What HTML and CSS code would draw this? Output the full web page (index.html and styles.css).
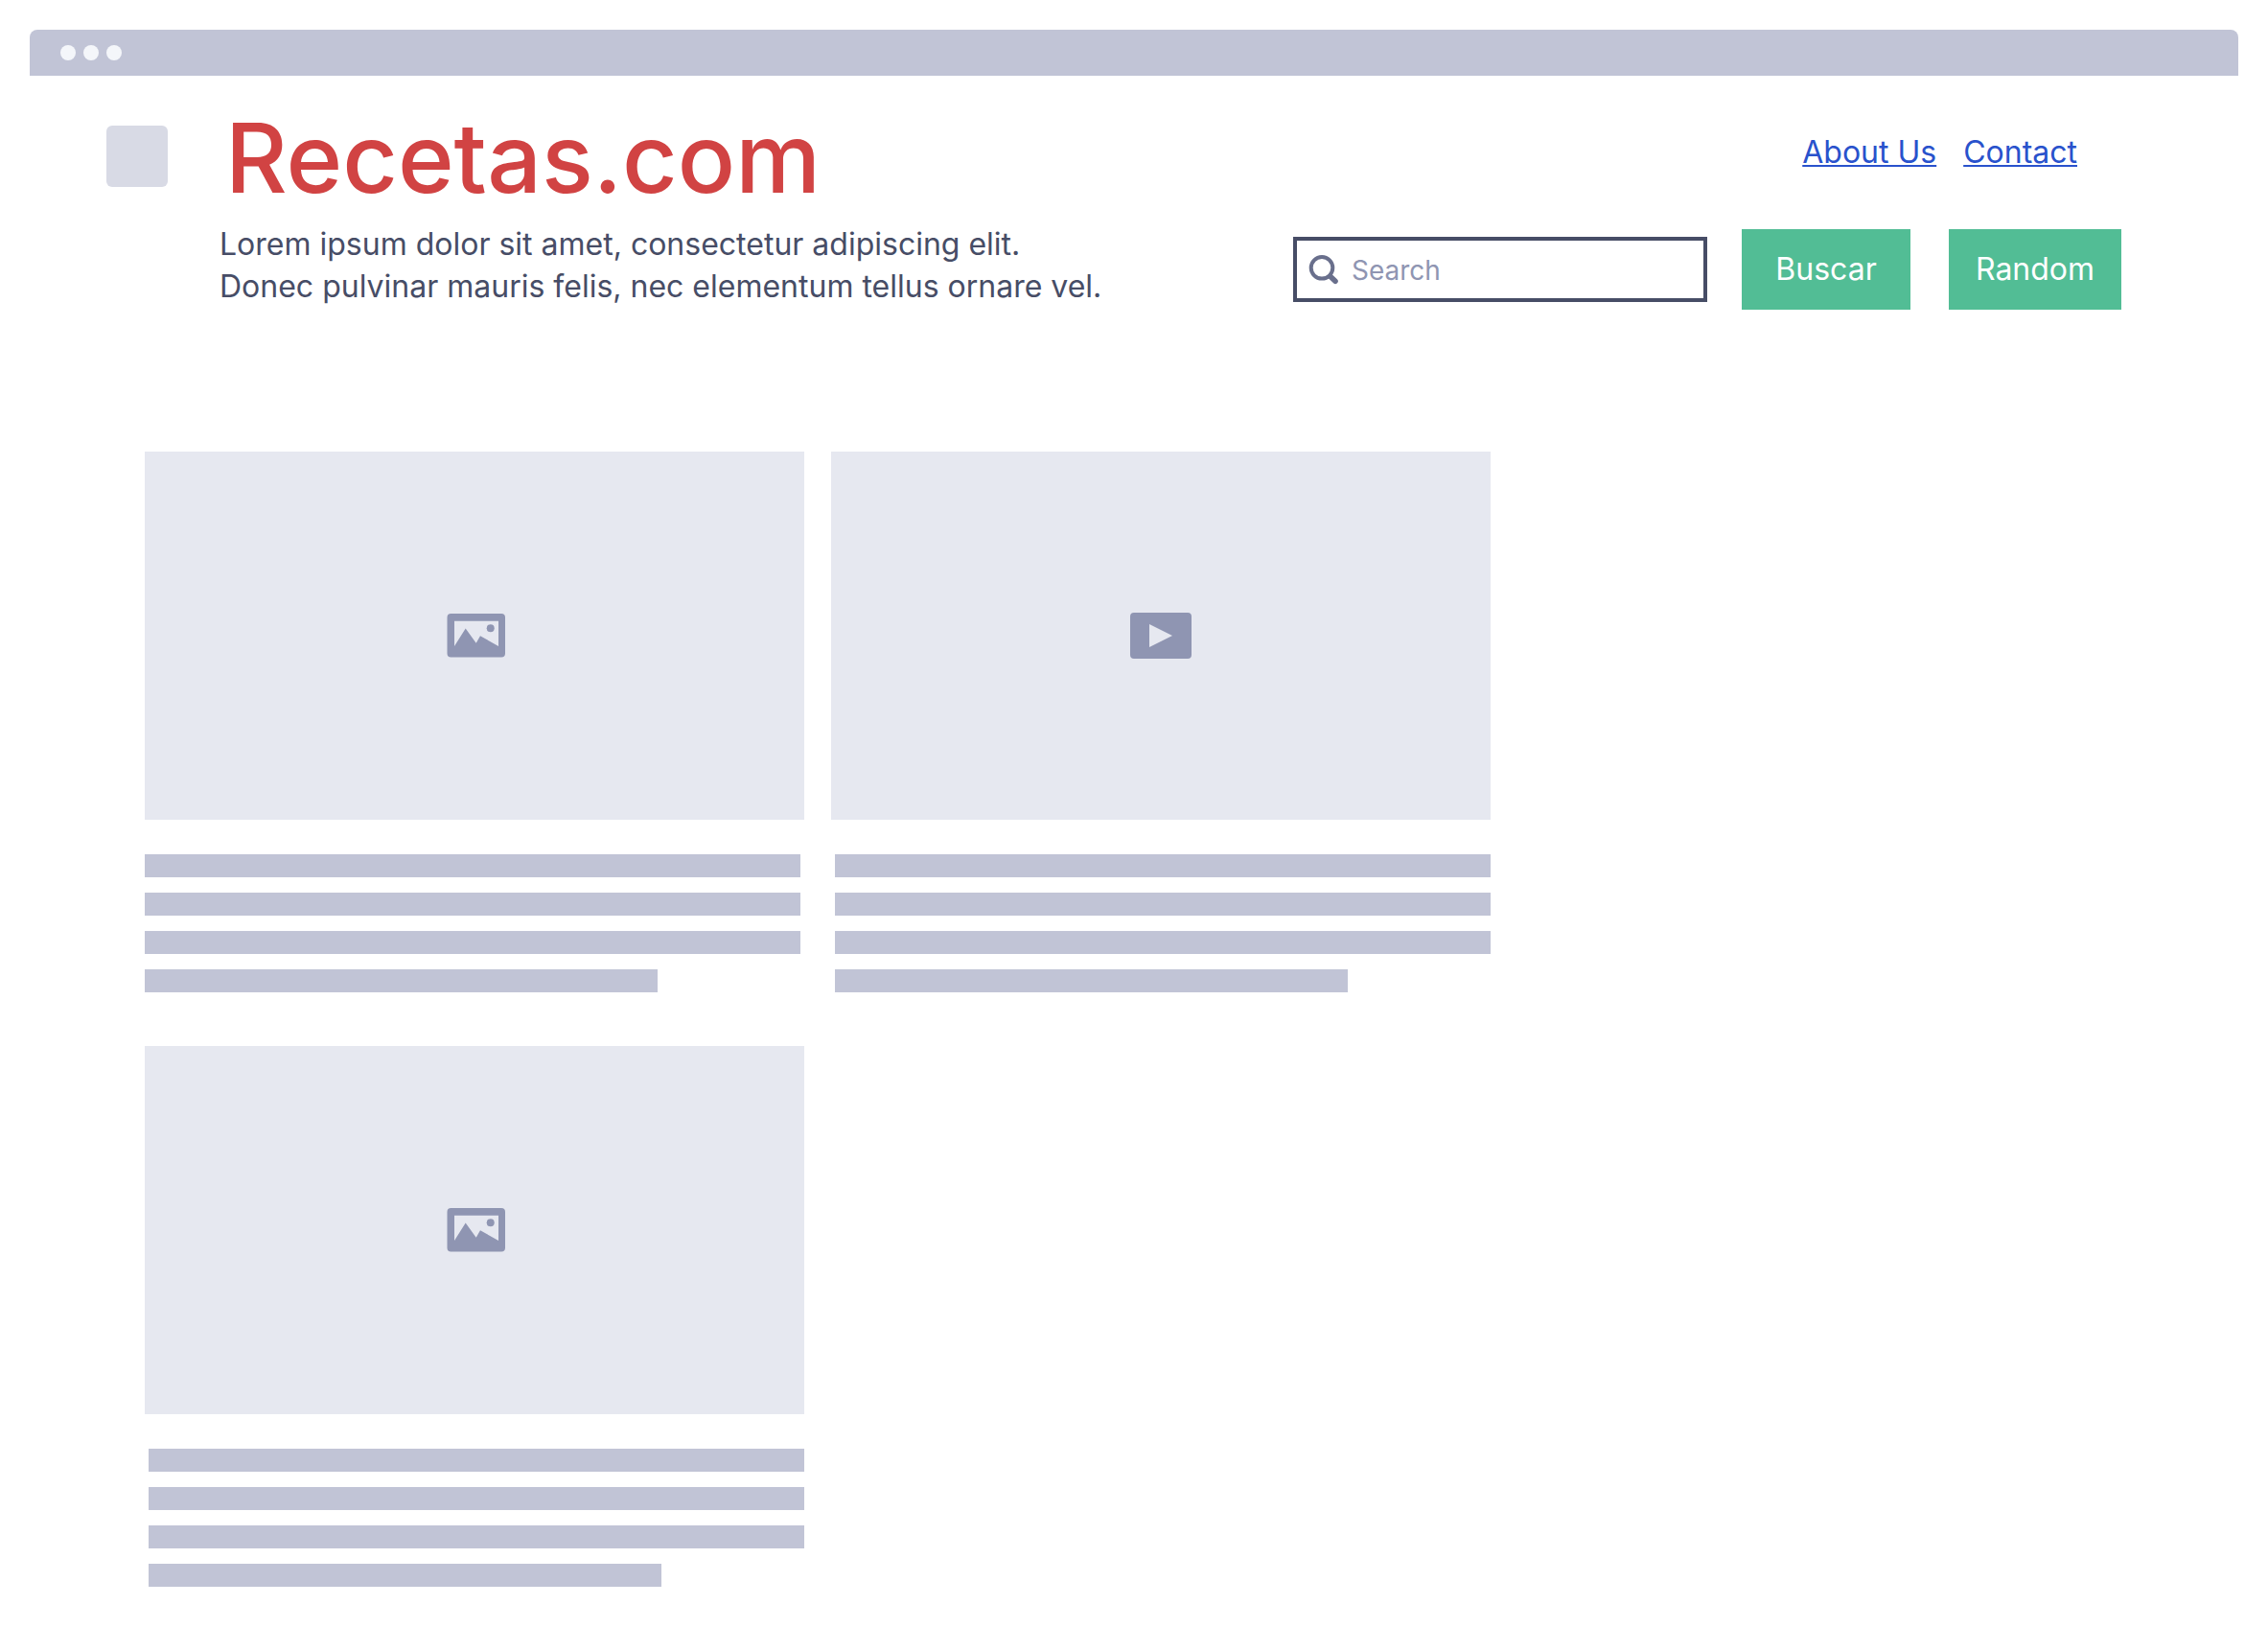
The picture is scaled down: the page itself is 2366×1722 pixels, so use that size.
FILE: index.html
```html
<!DOCTYPE html>
<html lang="es">
<head>
<meta charset="utf-8">
<meta name="viewport" content="width=device-width, initial-scale=1">
<title>Recetas.com</title>
<link rel="stylesheet" href="styles.css">
</head>
<body>
<div class="window">
  <div class="window-bar">
    <span class="dot"></span><span class="dot"></span><span class="dot"></span>
  </div>
  <header class="header">
    <div class="logo"></div>
    <div class="brand">
      <h1 class="title">Recetas.com</h1>
      <p class="tagline">Lorem ipsum dolor sit amet, consectetur adipiscing elit.<br>Donec pulvinar mauris felis, nec elementum tellus ornare vel.</p>
    </div>
    <div class="tools">
      <nav class="nav">
        <a class="link" href="#about">About Us</a>
        <a class="link" href="#contact">Contact</a>
      </nav>
      <form class="search-form">
        <label class="search">
          <svg class="search-icon" viewBox="0 0 32 32" fill="none" stroke="currentColor" stroke-linecap="round" aria-hidden="true">
            <circle cx="14" cy="14.3" r="11.3" stroke-width="4"/>
            <path d="M23 23.4L28 28.2" stroke-width="5.6"/>
          </svg>
          <input class="search-input" type="text" placeholder="Search" aria-label="Search">
        </label>
        <button class="button button-search" type="submit">Buscar</button>
        <button class="button button-random" type="button">Random</button>
      </form>
    </div>
  </header>
  <main class="cards">
    <article class="card">
      <div class="media">
        <svg class="media-icon" viewBox="0 0 64 48" aria-hidden="true">
          <path fill="currentColor" fill-rule="evenodd" d="M7.500 1H60a4 4 0 0 1 4 4V42.500a4 4 0 0 1-4 4H7.500a4 4 0 0 1-4-4V5a4 4 0 0 1 4-4ZM11 8.700V35L22.700 16.500L33.700 31.700L38 24.200L57 35V8.700Z"/>
          <circle cx="48.700" cy="16.300" r="4" fill="currentColor"/>
        </svg>
      </div>
      <div class="lines"><span class="line"></span><span class="line"></span><span class="line"></span><span class="line line-short"></span></div>
    </article>
    <article class="card">
      <div class="media">
        <svg class="media-icon" viewBox="0 0 64 48" aria-hidden="true">
          <path fill="currentColor" fill-rule="evenodd" d="M4 0H60a4 4 0 0 1 4 4V44a4 4 0 0 1-4 4H4a4 4 0 0 1-4-4V4a4 4 0 0 1 4-4ZM20 12V36L44 24Z"/>
        </svg>
      </div>
      <div class="lines lines-end"><span class="line"></span><span class="line"></span><span class="line"></span><span class="line line-short"></span></div>
    </article>
    <article class="card card-row-start">
      <div class="media">
        <svg class="media-icon" viewBox="0 0 64 48" aria-hidden="true">
          <path fill="currentColor" fill-rule="evenodd" d="M7.500 1H60a4 4 0 0 1 4 4V42.500a4 4 0 0 1-4 4H7.500a4 4 0 0 1-4-4V5a4 4 0 0 1 4-4ZM11 8.700V35L22.700 16.500L33.700 31.700L38 24.200L57 35V8.700Z"/>
          <circle cx="48.700" cy="16.300" r="4" fill="currentColor"/>
        </svg>
      </div>
      <div class="lines lines-end"><span class="line"></span><span class="line"></span><span class="line"></span><span class="line line-short"></span></div>
    </article>
  </main>
</div>
</body>
</html>
```
FILE: styles.css
```css
* {
  box-sizing: border-box;
}

body {
  margin: 0;
  padding: 31px;
  background: #fff;
  color: #474d66;
  font-family: Inter, "Liberation Sans", sans-serif;
  font-size: 32px;
  line-height: 44px;
}

.window-bar {
  display: flex;
  align-items: center;
  gap: 8px;
  height: 48px;
  padding: 0 32px;
  border-radius: 8px 8px 0 0;
  background: #c1c4d6;
}

.dot {
  width: 16px;
  height: 16px;
  border-radius: 50%;
  background: #f4f6fa;
}

.header {
  display: flex;
  align-items: flex-start;
  padding: 32px 122px 0 80px;
}

.logo {
  flex: none;
  width: 64px;
  height: 64px;
  margin: 20px 54px 0 0;
  border-radius: 6px;
  background: #d8dae5;
}

.brand {
  flex: 1;
}

.title {
  margin: 0 0 14px;
  padding-left: 6px;
  color: #d14343;
  font-size: 100px;
  font-weight: 500;
  line-height: 108px;
}

.tagline {
  margin: 0;
}

.tools {
  padding-top: 26px;
}

.nav {
  display: flex;
  justify-content: flex-end;
  gap: 28px;
  padding-right: 46px;
}

.link {
  color: #2952cc;
  text-decoration-thickness: 2px;
  text-underline-offset: 2px;
}

.search-form {
  display: flex;
  align-items: center;
  margin-top: 58px;
}

.search {
  display: flex;
  align-items: center;
  gap: 13px;
  width: 432px;
  height: 68px;
  margin-right: 36px;
  padding: 0 12px;
  border: 4px solid #474d66;
}

.search-icon {
  flex: none;
  width: 32px;
  height: 32px;
  color: #696f8c;
}

.search-input {
  flex: 1;
  min-width: 0;
  padding: 2px 0 0;
  border: 0;
  outline: 0;
  background: transparent;
  color: #474d66;
  font: inherit;
  font-size: 28px;
}

.search-input::placeholder {
  color: #8f95b2;
  opacity: 1;
}

.button {
  height: 84px;
  padding: 0;
  border: 0;
  background: #52bd95;
  color: #fff;
  font: inherit;
}

.button-search {
  width: 176px;
  margin-right: 40px;
}

.button-random {
  width: 180px;
}

.cards {
  display: grid;
  grid-template-columns: repeat(3, 1fr);
  gap: 56px 28px;
  padding: 148px 64px 0 120px;
}

.card-row-start {
  grid-column: 1;
}

.media {
  display: flex;
  align-items: center;
  justify-content: center;
  aspect-ratio: 43 / 24;
  background: #e6e8f0;
}

.media-icon {
  width: 64px;
  height: 48px;
  color: #8f95b2;
}

.lines {
  display: flex;
  flex-direction: column;
  gap: 16px;
  margin-top: 36px;
  padding-right: 4px;
}

.lines-end {
  padding: 0 0 0 4px;
}

.line {
  height: 24px;
  background: #c1c4d6;
}

.line-short {
  width: 78.2%;
}
```
